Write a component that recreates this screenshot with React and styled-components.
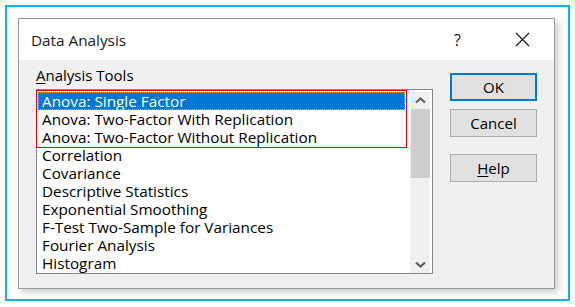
import React from 'react';
import styled, { createGlobalStyle } from 'styled-components';

const GlobalStyle = createGlobalStyle`
    html, body {
        margin: 0;
        padding: 0;
        background: #ffffff;
    }
    body {
        font-family: "Open Sans", "Noto Sans", sans-serif;
        color: #000000;
    }
`;

const tools = [
    'Anova: Single Factor',
    'Anova: Two-Factor With Replication',
    'Anova: Two-Factor Without Replication',
    'Correlation',
    'Covariance',
    'Descriptive Statistics',
    'Exponential Smoothing',
    'F-Test Two-Sample for Variances',
    'Fourier Analysis',
    'Histogram',
];

function Chevron({ down }) {
    return (
        <svg width="11" height="7" viewBox="0 0 11 7">
            <path
                d={down ? 'M1 1.5 L5.5 5.5 L10 1.5' : 'M1 5.5 L5.5 1.5 L10 5.5'}
                fill="none"
                stroke="#606060"
                strokeWidth="2.2"
            />
        </svg>
    );
}

function App() {
    const anova = tools.slice(0, 3);
    const rest = tools.slice(3);

    return (
        <>
            <GlobalStyle />
            <Frame>
                <Dialog>
                    <TitleBar>
                        <span className="title">Data Analysis</span>
                        <span className="help">?</span>
                        <span className="close">
                            <svg width="15" height="15" viewBox="0 0 15 15">
                                <path d="M1 1 L14 14 M14 1 L1 14" stroke="#1a1a1a" strokeWidth="1.2" />
                            </svg>
                        </span>
                    </TitleBar>
                    <Body>
                        <LeftColumn>
                            <Label><u>A</u>nalysis Tools</Label>
                            <ListBox>
                                <Items>
                                    <Group>
                                        {anova.map((t, i) => (
                                            <Item key={t} selected={i === 0}>{t}</Item>
                                        ))}
                                    </Group>
                                    {rest.map(t => (
                                        <Item key={t}>{t}</Item>
                                    ))}
                                </Items>
                                <ScrollBar>
                                    <div className="arrow"><Chevron /></div>
                                    <div className="track">
                                        <div className="thumb" />
                                    </div>
                                    <div className="arrow"><Chevron down /></div>
                                </ScrollBar>
                            </ListBox>
                        </LeftColumn>
                        <Buttons>
                            <Button primary>OK</Button>
                            <Button>Cancel</Button>
                            <Button spaced><u>H</u>elp</Button>
                        </Buttons>
                    </Body>
                </Dialog>
            </Frame>
        </>
    );
}

const Frame = styled.div`
    box-sizing: border-box;
    width: 565px;
    height: 296px;
    margin: 5px;
    border: 2px solid #10b2ee;
    padding: 11px 13px 10px 11px;
    background: #ffffff;
`;

const Dialog = styled.div`
    box-sizing: border-box;
    width: 537px;
    height: 271px;
    border: 1px solid #9a9a9a;
    display: flex;
    flex-direction: column;
    box-shadow: 3px 3px 7px rgba(0, 0, 0, 0.22);
`;

const TitleBar = styled.div`
    height: 41px;
    background: #ffffff;
    display: flex;
    align-items: center;
    padding-left: 12px;
    font-size: 15.3px;
    color: #1a1a1a;

    .title{
        flex: 1;
    }

    .help{
        font-size: 16px;
        margin-right: 54px;
    }

    .close{
        display: flex;
        margin-right: 24px;
    }
`;

const Body = styled.div`
    flex: 1;
    background: #f0f0f0;
    display: flex;
    padding: 5px 0 0 17px;
`;

const LeftColumn = styled.div`
    display: flex;
    flex-direction: column;
`;

const Label = styled.div`
    font-size: 15px;
    line-height: 20px;
    height: 24px;

    u{
        text-decoration-thickness: 1px;
        text-underline-offset: 2px;
    }
`;

const ListBox = styled.div`
    box-sizing: border-box;
    width: 397px;
    height: 185px;
    border: 1px solid #828790;
    background: #ffffff;
    display: flex;
    padding: 2px 2px 0 1px;
`;

const Items = styled.div`
    width: 369px;
    display: flex;
    flex-direction: column;
`;

const Group = styled.div`
    outline: 1px solid #e8000b;
    outline-offset: 1px;
`;

const Item = styled.div`
    height: 18px;
    line-height: 18px;
    font-size: 15.3px;
    padding-left: 4px;
    white-space: nowrap;
    box-sizing: border-box;
    background: ${p => (p.selected ? '#0078d7' : 'transparent')};
    color: ${p => (p.selected ? '#ffffff' : '#000000')};
    outline: ${p => (p.selected ? '1px dotted #f0a040' : 'none')};
    outline-offset: -1px;
`;

const ScrollBar = styled.div`
    width: 20px;
    margin-left: 5px;
    background: #f0f0f0;
    display: flex;
    flex-direction: column;

    .arrow{
        height: 17px;
        display: flex;
        align-items: center;
        justify-content: center;
    }

    .track{
        flex: 1;
        display: flex;
        flex-direction: column;
    }

    .thumb{
        height: 69px;
        margin: 0 0 0 1px;
        background: #cdcdcd;
    }
`;

const Buttons = styled.div`
    display: flex;
    flex-direction: column;
    margin-left: 17px;
    padding-top: 8px;
`;

const Button = styled.div`
    box-sizing: border-box;
    width: 87px;
    height: 28px;
    margin-bottom: 8px;
    margin-top: ${p => (p.spaced ? '9px' : '0')};
    display: flex;
    align-items: center;
    justify-content: center;
    font-size: 15px;
    background: #e1e1e1;
    border: ${p => (p.primary ? '2px solid #0078d7' : '1px solid #adadad')};

    u{
        text-decoration-thickness: 1px;
        text-underline-offset: 2px;
    }
`;

export default App;
